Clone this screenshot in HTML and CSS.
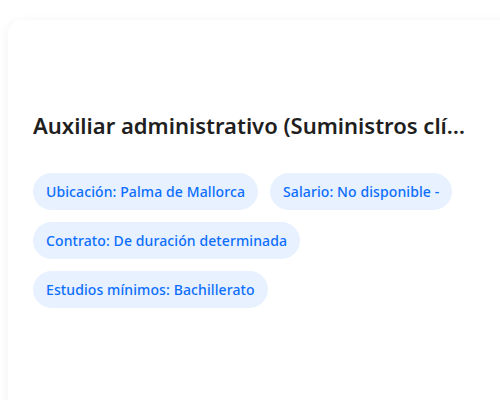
FILE: index.html
```html
<!doctype html>
<html lang="es">
  <head>
    <meta charset="UTF-8" />
    <meta name="viewport" content="width=device-width, initial-scale=1.0" />
    <title>Oferta de empleo</title>
    <link rel="stylesheet" href="styles.css">
  </head>
  <body>
    <div class="job-card">
      <div class="job-header"></div>
      <h2 class="job-title">Auxiliar administrativo (Suministros clínicos y material sanitario)</h2>
      <div class="job-tags">
        <span class="tag">Ubicación: Palma de Mallorca</span>
        <span class="tag">Salario: No disponible -</span>
        <span class="tag">Contrato: De duración determinada</span>
        <span class="tag">Estudios mínimos: Bachillerato</span>
      </div>
    </div>
  </body>
</html>
```

FILE: styles.css
```css
body {
  background-color: white;
  margin: 0;
  padding: 20px 0 0 8px;
  font-family: "Noto Sans", "Open Sans", sans-serif;
  overflow: hidden;
  height: 380px;
}
.job-card {
  background: white;
  border-radius: 14px;
  box-shadow: 0 2px 12px rgba(0, 0, 0, 0.06);
  padding: 0 25px 0 25px;
  width: 520px;
  height: 420px;
}
.job-header {
  height: 90px;
}
.job-title {
  margin: 0 0 33px 0;
  max-width: 436px;
  font-size: 22px;
  font-weight: 600;
  color: #1f1f1f;
  white-space: nowrap;
  overflow: hidden;
  text-overflow: ellipsis;
}
.job-tags {
  display: flex;
  flex-wrap: wrap;
  gap: 12px;
  max-width: 430px;
}
.tag {
  background: #e7f1ff;
  color: #0d6efd;
  font-size: 14px;
  font-weight: 500;
  letter-spacing: 0.1px;
  padding: 8px 13px;
  border-radius: 20px;
  line-height: 21px;
}
```
